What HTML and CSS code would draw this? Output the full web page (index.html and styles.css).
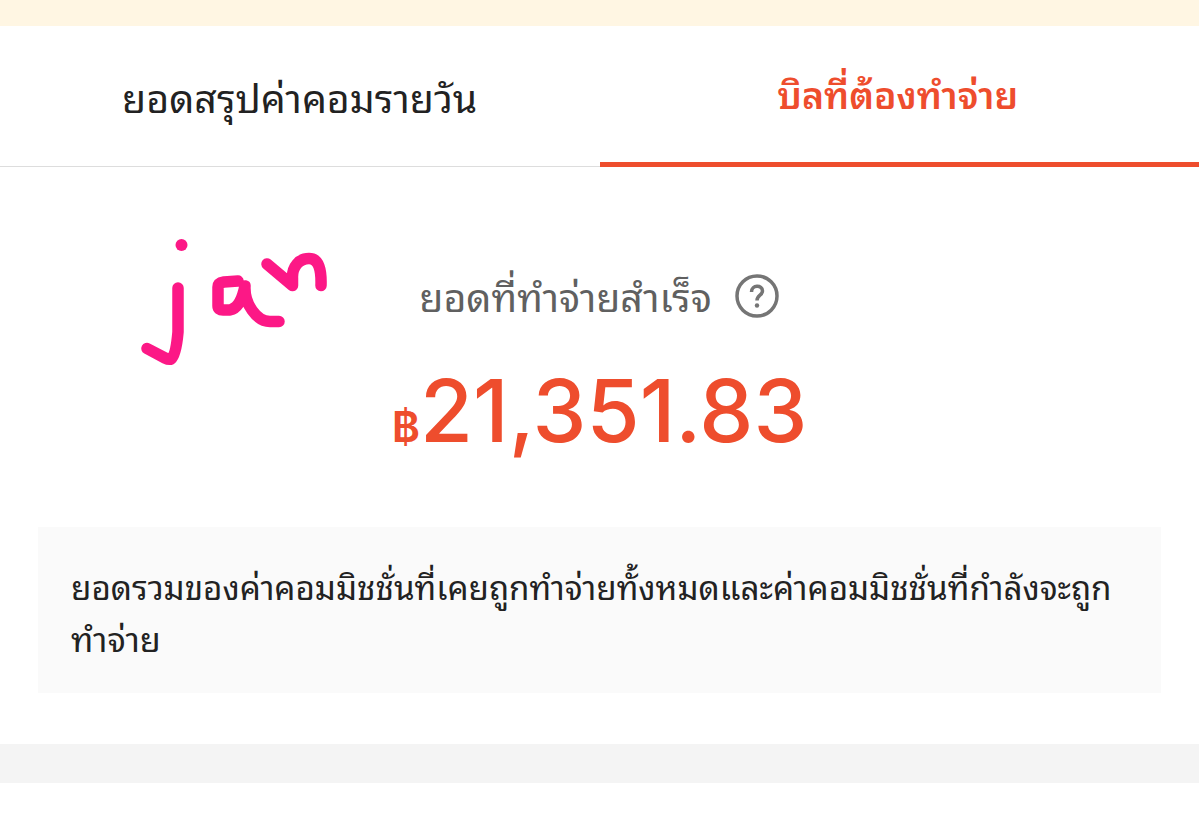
FILE: index.html
```html
<!DOCTYPE html>
<html lang="th">
  <head>
    <meta charset="UTF-8" />
    <meta name="viewport" content="width=device-width, initial-scale=1.0" />
    <title>บิลที่ต้องทำจ่าย</title>
    <link rel="stylesheet" href="styles.css">
  </head>
  <body>
    <div class="notice"></div>
    <nav class="tabs">
      <a class="tab"><span class="tab-text">ยอดสรุปค่าคอมรายวัน</span></a>
      <a class="tab active"><span class="tab-text">บิลที่ต้องทำจ่าย</span></a>
    </nav>
    <main class="summary">
      <svg class="note" viewBox="0 0 230 160">
        <circle cx="61.5" cy="25" r="6" fill="#fc1886" />
        <path d="M58 68V112Q56 135 51 139Q49 140 45 138L27 128.500" />
        <path d="M118 61L104 62Q98 63 98 67V86Q98 90 103 90H110C119 88 123 76 125 66C124 84 137 101.500 150 101.500H159" />
        <path d="M147 44L172.500 65.500V58C172 47 179 38.500 189 38.500C199 38.500 201.500 50 201 65.500" />
      </svg>
      <div class="label">
        <span class="label-text">ยอดที่ทำจ่ายสำเร็จ</span>
        <svg class="help" viewBox="0 0 46 46">
          <circle cx="23" cy="23" r="20" />
          <path d="M17.500 19C17.500 11.500 28.500 11.500 28.500 18C28.500 22.500 23 22 23 27.500" />
          <circle class="dot" cx="23" cy="32.500" r="2.200" />
        </svg>
      </div>
      <div class="amount"><span class="currency">฿</span><span class="number">21,351.83</span></div>
      <p class="description"><span class="line first">ยอดรวมของค่าคอมมิชชั่นที่เคยถูกทำจ่ายทั้งหมดและค่าคอมมิชชั่นที่กำลังจะถูก</span><br><span class="line">ทำจ่าย</span></p>
    </main>
    <div class="divider"></div>
  </body>
</html>
```
FILE: styles.css
```css
* {
  box-sizing: border-box;
}
body {
  margin: 0;
  height: 815px;
  overflow: hidden;
  background: #fff;
  color: #222;
  font-family: Inter, "Noto Sans Thai Looped", Loma, Garuda, Waree, "Noto Sans Thai", "Noto Sans", sans-serif;
}
.notice {
  height: 26px;
  background: #fff6e3;
}
.tabs {
  display: flex;
  height: 141px;
}
.tab {
  width: 50%;
  padding-top: 43px;
  border-bottom: 1px solid #ddd;
  text-align: center;
  font-size: 39.3px;
  line-height: 60px;
  white-space: nowrap;
}
.tab.active {
  padding-top: 40px;
  padding-right: 3px;
  border-bottom: 5px solid #ee4d2d;
  color: #ee4d2d;
  font-size: 37.4px;
  font-weight: 600;
}
.summary {
  position: relative;
  height: 577px;
  padding: 98px 38px 0;
}
/* handwritten month over the summary */
.note {
  position: absolute;
  left: 120px;
  top: 53px;
  width: 230px;
  height: 160px;
}
.note path {
  fill: none;
  stroke: #fc1886;
  stroke-width: 11.5;
  stroke-linecap: round;
  stroke-linejoin: round;
}
.label {
  display: flex;
  align-items: center;
  justify-content: center;
  gap: 22px;
  height: 62px;
  color: #606060;
  font-size: 39.3px;
  white-space: nowrap;
}
.label-text {
  margin-top: -3px;
}
.help {
  width: 46px;
  height: 46px;
  fill: none;
  stroke: #757575;
  stroke-width: 3.5;
}
.help .dot {
  fill: #757575;
  stroke: none;
}
.amount {
  display: flex;
  align-items: baseline;
  justify-content: center;
  height: 120px;
  margin-top: 30px;
  color: #ee4d2d;
  line-height: 108px;
}
.currency {
  font-size: 43px;
  font-weight: 600;
}
.number {
  font-size: 86px;
  font-weight: 500;
}
.description {
  height: 166px;
  margin: 50px 0 0;
  padding: 35px 33px;
  background: #fafafa;
  font-size: 34.2px;
  line-height: 51px;
  white-space: nowrap;
}
/* the long line is set a little tighter so it keeps clear of the edge */
.line.first {
  font-size: 33.2px;
}
.divider {
  height: 39px;
  background: #f4f4f4;
}
```
